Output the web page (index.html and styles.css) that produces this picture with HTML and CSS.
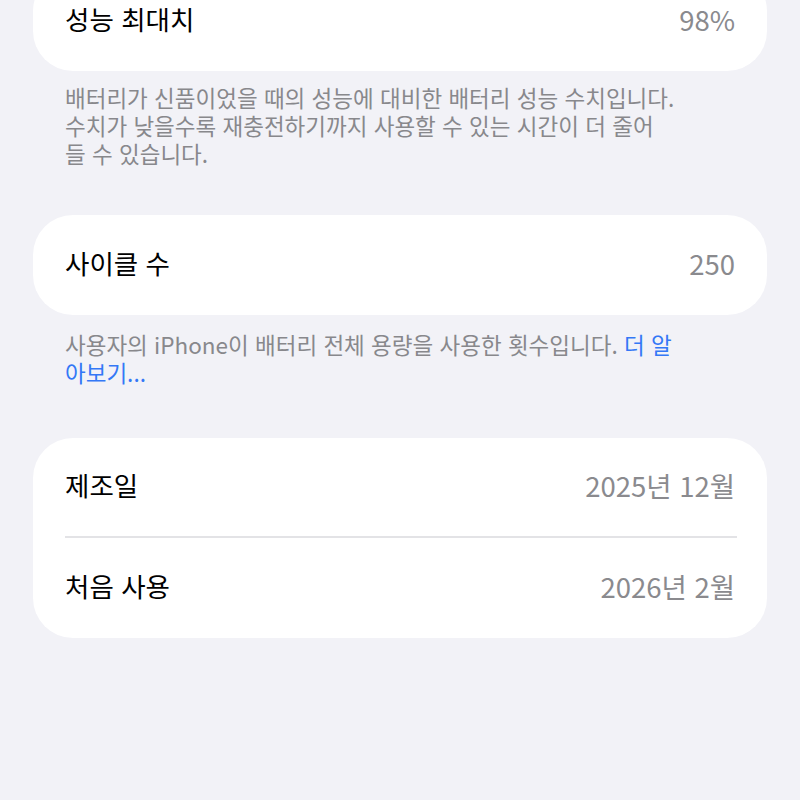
FILE: index.html
```html
<!DOCTYPE html>
<html lang="ko">
<head>
<meta charset="utf-8">
<link rel="stylesheet" href="styles.css">
</head>
<body>
<main class="page">
  <section class="card card-first">
    <div class="row"><span class="label">성능 최대치</span><span class="value">98%</span></div>
  </section>
  <p class="footer footer-first">배터리가 신품이었을 때의 성능에 대비한 배터리 성능 수치입니다.<br>수치가 낮을수록 재충전하기까지 사용할 수 있는 시간이 더 줄어<br>들 수 있습니다.</p>

  <section class="card">
    <div class="row"><span class="label">사이클 수</span><span class="value">250</span></div>
  </section>
  <p class="footer footer-second">사용자의 iPhone이 배터리 전체 용량을 사용한 횟수입니다. <a class="link">더 알<br>아보기...</a></p>

  <section class="card">
    <div class="row row-top"><span class="label">제조일</span><span class="value">2025년 12월</span></div>
    <div class="divider"></div>
    <div class="row"><span class="label">처음 사용</span><span class="value">2026년 2월</span></div>
  </section>
</main>
</body>
</html>
```

FILE: styles.css
```css
html, body {
  margin: 0;
  padding: 0;
  background: #f2f2f7;
}
body {
  font-family: "Noto Sans CJK KR", "Noto Sans", sans-serif;
  width: 800px;
  height: 800px;
  overflow: hidden;
}
.page {
  padding: 0 33px;
  display: flex;
  flex-direction: column;
}
.card {
  background: #ffffff;
  border-radius: 40px;
  display: flex;
  flex-direction: column;
}
.card-first {
  margin-top: -29px;
}
.row {
  height: 100px;
  box-sizing: border-box;
  display: flex;
  align-items: center;
  justify-content: space-between;
  padding: 0 32px 5px;
}
.row-top {
  height: 99px;
}
.label {
  font-size: 26.5px;
  line-height: 32px;
  color: #000000;
}
.value {
  font-size: 27.5px;
  line-height: 32px;
  color: #8a8a8e;
}
.divider {
  height: 2px;
  background: #e3e3e6;
  margin: -1px 30px 0 32px;
}
.footer {
  padding: 0 32px;
  font-size: 22.5px;
  line-height: 28px;
  color: #88888c;
}
.footer-first {
  margin: 12px 0 48px;
}
.footer-second {
  margin: 15px 0 52px;
}
.link {
  color: #3478f6;
}
```
